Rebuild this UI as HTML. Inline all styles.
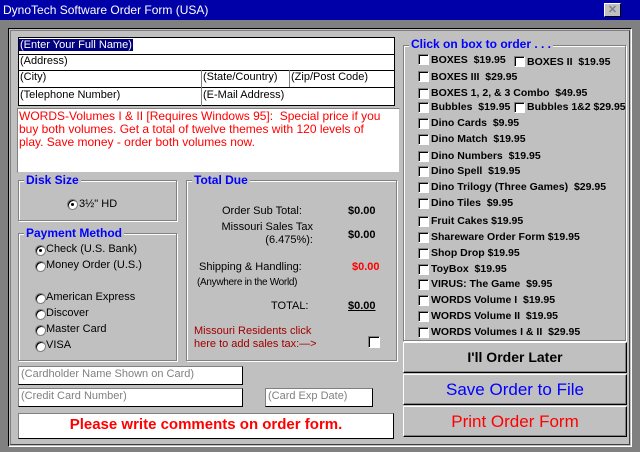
<!DOCTYPE html><html><head><style>
*{margin:0;padding:0;box-sizing:border-box}
body{width:640px;height:452px;background:#808080;position:relative;overflow:hidden;font-family:"Liberation Sans",sans-serif;font-size:11px;font-weight:bold;color:#000}
.a{position:absolute}
.t{position:absolute;white-space:nowrap}
.box{position:absolute;background:#fff;border:1px solid #000}
.grp{position:absolute;border:1px solid #808080;box-shadow:inset 1px 1px 0 #fff,1px 1px 0 #fff}
.gl{position:absolute;background:#c0c0c0;color:#0000ff;padding:0 2px;font-size:12px;top:-8px;left:5px;font-weight:bold}
.cb{position:absolute;width:12px;height:12px;background:#fff;border:1px solid #808080;border-right-color:#fff;border-bottom-color:#fff;box-shadow:inset 1px 1px 0 #000}
.pl .cb{width:11px;height:11px}
.rd{position:absolute;width:11px;height:11px;border-radius:50%;background:#fff;border:1px solid #808080;box-shadow:inset 1px 1px 0 #000}
.dot::after{content:"";position:absolute;left:3px;top:3px;width:3px;height:3px;background:#000;border-radius:50%}
.btn{position:absolute;left:403px;width:224px;height:31px;background:#c0c0c0;border:1px solid #fff;border-right-color:#000;border-bottom-color:#000;box-shadow:inset -1px -1px 0 #808080;text-align:center;line-height:29px;font-weight:normal;font-size:17px}
.in{position:absolute;background:#fff;border:1px solid #000;border-top-color:#808080;border-left-color:#808080;color:#808080;font-weight:normal;font-size:11px;padding:1px 2px}
.pl .t{margin-top:1px;margin-left:1px}
</style></head><body>
<div class="a" style="left:0;top:0;width:640px;height:20px;background:#0000a8"></div>
<div class="t" style="left:3px;top:3px;color:#fff;font-size:12px;font-weight:normal">DynoTech Software Order Form (USA)</div>
<div class="a" style="left:604px;top:3px;width:17px;height:14px;background:#c0c0c0;border:1px solid #fff;border-right-color:#000;border-bottom-color:#000;color:#808080;font-size:11px;text-align:center;line-height:12px">✕</div>
<div class="a" style="left:8px;top:28px;width:624px;height:419px;background:#c0c0c0;border:1px solid #000;border-right-color:#fff;border-bottom-color:#fff"></div>
<div class="a" style="left:10px;top:30px;width:620px;height:415px;border:1px solid #808080;border-right-color:#404040;border-bottom-color:#404040"></div>

<div class="box" style="left:18px;top:37px;width:377px;height:69px"></div>
<div class="a" style="left:18px;top:54px;width:377px;height:1px;background:#000"></div>
<div class="a" style="left:18px;top:70px;width:377px;height:1px;background:#000"></div>
<div class="a" style="left:18px;top:87px;width:377px;height:1px;background:#000"></div>
<div class="a" style="left:201px;top:70px;width:1px;height:36px;background:#808080"></div>
<div class="a" style="left:289px;top:70px;width:1px;height:17px;background:#808080"></div>
<div class="t" style="left:19px;top:39px;background:#000080;color:#fff;font-weight:normal;padding:0 1px">(Enter Your Full Name)</div>
<div class="t" style="left:20px;top:55px;font-weight:normal">(Address)</div>
<div class="t" style="left:20px;top:71px;font-weight:normal">(City)</div>
<div class="t" style="left:203px;top:71px;font-weight:normal">(State/Country)</div>
<div class="t" style="left:291px;top:71px;font-weight:normal">(Zip/Post Code)</div>
<div class="t" style="left:20px;top:89px;font-weight:normal">(Telephone Number)</div>
<div class="t" style="left:203px;top:89px;font-weight:normal">(E-Mail Address)</div>

<div class="a" style="left:17px;top:108px;width:383px;height:65px;background:#fff;border:1px solid #808080;border-right-color:#c0c0c0;border-bottom-color:#c0c0c0"></div>
<div class="a" style="left:19px;top:110px;width:372px;color:#f00;font-weight:normal;line-height:13px;font-size:12px">WORDS-Volumes I &amp; II [Requires Windows 95]:&nbsp; Special price if you buy both volumes. Get a total of twelve themes with 120 levels of play. Save money - order both volumes now.</div>

<div class="grp" style="left:18px;top:180px;width:159px;height:41px"><span class="gl">Disk Size</span></div>
<div class="rd dot" style="left:67px;top:199px"></div><div class="t" style="left:79px;top:198px;font-weight:normal">3½" HD</div>

<div class="grp" style="left:18px;top:233px;width:159px;height:128px"><span class="gl">Payment Method</span></div>
<div class="rd dot" style="left:35px;top:245px"></div><div class="t" style="left:46px;top:243px;font-weight:normal">Check (U.S. Bank)</div>
<div class="rd" style="left:35px;top:261px"></div><div class="t" style="left:46px;top:259px;font-weight:normal">Money Order (U.S.)</div>
<div class="rd" style="left:35px;top:293px"></div><div class="t" style="left:46px;top:291px;font-weight:normal">American Express</div>
<div class="rd" style="left:35px;top:309px"></div><div class="t" style="left:46px;top:307px;font-weight:normal">Discover</div>
<div class="rd" style="left:35px;top:325px"></div><div class="t" style="left:46px;top:323px;font-weight:normal">Master Card</div>
<div class="rd" style="left:35px;top:341px"></div><div class="t" style="left:46px;top:339px;font-weight:normal">VISA</div>

<div class="grp" style="left:186px;top:180px;width:211px;height:181px"><span class="gl">Total Due</span></div>
<div class="t" style="left:222px;top:205px;font-weight:normal">Order Sub Total:</div>
<div class="t" style="left:348px;top:205px">$0.00</div>
<div class="t" style="left:208px;top:221px;font-weight:normal;text-align:right;width:105px;white-space:normal;line-height:13px">Missouri Sales Tax (6.475%):</div>
<div class="t" style="left:348px;top:229px">$0.00</div>
<div class="t" style="left:199px;top:261px;font-weight:normal">Shipping &amp; Handling:</div>
<div class="t" style="left:352px;top:261px;color:#f00">$0.00</div>
<div class="t" style="left:197px;top:277px;font-weight:normal;font-size:10px;letter-spacing:-0.3px">(Anywhere in the World)</div>
<div class="t" style="left:271px;top:300px;font-weight:normal">TOTAL:</div>
<div class="t" style="left:348px;top:300px;text-decoration:underline">$0.00</div>
<div class="t" style="left:194px;top:325px;color:#a00000;font-weight:normal;line-height:13px">Missouri Residents click<br>here to add sales tax:—&gt;</div>
<div class="cb" style="left:368px;top:336px"></div>

<div class="grp" style="left:403px;top:45px;width:223px;height:296px"><span class="gl" style="top:-9px">Click on box to order . . .</span></div>
<div class="pl" style="font-size:10.5px">
<div class="cb" style="left:418px;top:54px"></div><div class="t" style="left:430px;top:53px">BOXES&nbsp; $19.95</div>
<div class="cb" style="left:514px;top:56px"></div><div class="t" style="left:526px;top:55px">BOXES II&nbsp; $19.95</div>
<div class="cb" style="left:418px;top:71px"></div><div class="t" style="left:430px;top:70px">BOXES III&nbsp; $29.95</div>
<div class="cb" style="left:418px;top:88px"></div><div class="t" style="left:430px;top:86px">BOXES 1, 2, &amp; 3 Combo&nbsp; $49.95</div>
<div class="cb" style="left:418px;top:102px"></div><div class="t" style="left:430px;top:100px">Bubbles&nbsp; $19.95</div>
<div class="cb" style="left:514px;top:102px"></div><div class="t" style="left:526px;top:100px">Bubbles 1&amp;2 $29.95</div>
<div class="cb" style="left:418px;top:118px"></div><div class="t" style="left:430px;top:116px">Dino Cards&nbsp; $9.95</div>
<div class="cb" style="left:418px;top:134px"></div><div class="t" style="left:430px;top:132px">Dino Match&nbsp; $19.95</div>
<div class="cb" style="left:418px;top:151px"></div><div class="t" style="left:430px;top:149px">Dino Numbers&nbsp; $19.95</div>
<div class="cb" style="left:418px;top:166px"></div><div class="t" style="left:430px;top:164px">Dino Spell&nbsp; $19.95</div>
<div class="cb" style="left:418px;top:182px"></div><div class="t" style="left:430px;top:180px">Dino Trilogy (Three Games)&nbsp; $29.95</div>
<div class="cb" style="left:418px;top:198px"></div><div class="t" style="left:430px;top:196px">Dino Tiles&nbsp; $9.95</div>
<div class="cb" style="left:418px;top:216px"></div><div class="t" style="left:430px;top:214px">Fruit Cakes $19.95</div>
<div class="cb" style="left:418px;top:232px"></div><div class="t" style="left:430px;top:230px">Shareware Order Form $19.95</div>
<div class="cb" style="left:418px;top:248px"></div><div class="t" style="left:430px;top:246px">Shop Drop $19.95</div>
<div class="cb" style="left:418px;top:264px"></div><div class="t" style="left:430px;top:262px">ToyBox&nbsp; $19.95</div>
<div class="cb" style="left:418px;top:279px"></div><div class="t" style="left:430px;top:277px">VIRUS: The Game&nbsp; $9.95</div>
<div class="cb" style="left:418px;top:295px"></div><div class="t" style="left:430px;top:293px">WORDS Volume I&nbsp; $19.95</div>
<div class="cb" style="left:418px;top:311px"></div><div class="t" style="left:430px;top:309px">WORDS Volume II&nbsp; $19.95</div>
<div class="cb" style="left:418px;top:327px"></div><div class="t" style="left:430px;top:325px">WORDS Volumes I &amp; II&nbsp; $29.95</div>
</div>

<div class="btn" style="top:342px;color:#000;font-weight:bold;font-size:14px">I'll Order Later</div>
<div class="btn" style="top:374px;color:#00f">Save Order to File</div>
<div class="btn" style="top:406px;color:#f00">Print Order Form</div>

<div class="in" style="left:18px;top:366px;width:225px;height:19px">(Cardholder Name Shown on Card)</div>
<div class="in" style="left:18px;top:388px;width:225px;height:19px">(Credit Card Number)</div>
<div class="in" style="left:265px;top:388px;width:108px;height:19px">(Card Exp Date)</div>
<div class="a" style="left:18px;top:413px;width:376px;height:26px;background:#fff;border:1px solid #000;border-top-color:#808080;border-left-color:#808080;color:#f00;text-align:center;line-height:22px;font-size:15px">Please write comments on order form.</div>
</body></html>
